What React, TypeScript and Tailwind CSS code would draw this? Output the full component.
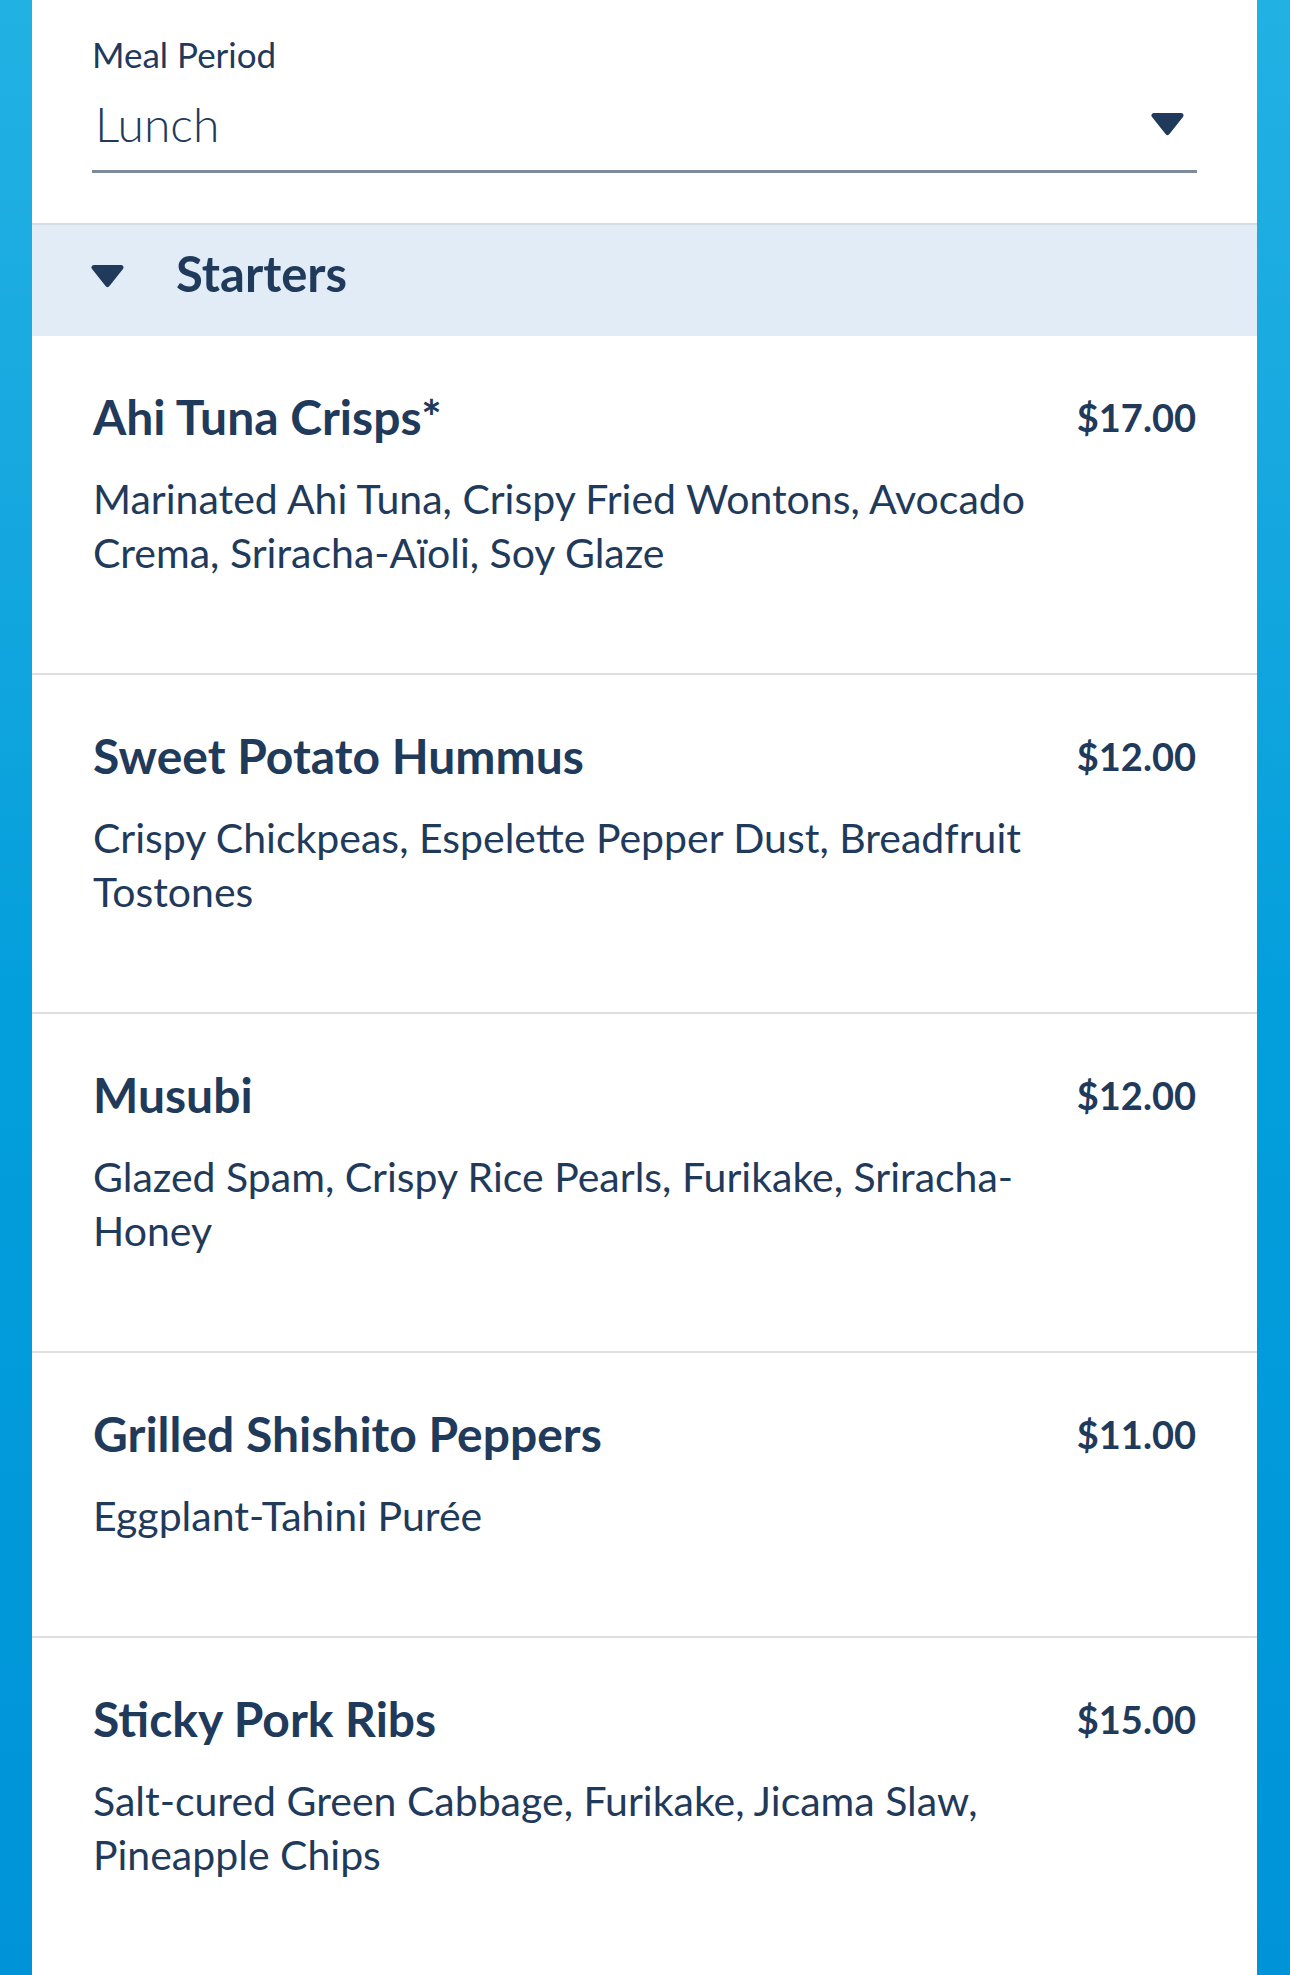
import React from 'react';

interface MenuItem {
  name: string;
  price: string;
  description: string;
}

const items: MenuItem[] = [
  {
    name: 'Ahi Tuna Crisps*',
    price: '$17.00',
    description: 'Marinated Ahi Tuna, Crispy Fried Wontons, Avocado Crema, Sriracha-Aïoli, Soy Glaze',
  },
  {
    name: 'Sweet Potato Hummus',
    price: '$12.00',
    description: 'Crispy Chickpeas, Espelette Pepper Dust, Breadfruit Tostones',
  },
  {
    name: 'Musubi',
    price: '$12.00',
    description: 'Glazed Spam, Crispy Rice Pearls, Furikake, Sriracha-Honey',
  },
  {
    name: 'Grilled Shishito Peppers',
    price: '$11.00',
    description: 'Eggplant-Tahini Purée',
  },
  {
    name: 'Sticky Pork Ribs',
    price: '$15.00',
    description: 'Salt-cured Green Cabbage, Furikake, Jicama Slaw, Pineapple Chips',
  },
];

const Caret = ({ className }: { className?: string }) => (
  <svg viewBox="0 0 35 24" className={className} aria-hidden="true">
    <path
      d="M4 3.5 H31 L17.5 20.5 Z"
      fill="#1f3a5a"
      stroke="#1f3a5a"
      strokeWidth="5"
      strokeLinejoin="round"
    />
  </svg>
);

const MenuRow = ({ item }: { item: MenuItem }) => (
  <div className="border-b-2 border-[#dedfe1] px-[61px] pt-[52px] pb-[93px]">
    <div className="flex items-start justify-between gap-8">
      <h3 className="text-[48px] leading-[58px] font-bold">{item.name}</h3>
      <span className="text-[38px] leading-[58px] font-bold">{item.price}</span>
    </div>
    <p className="mt-[26px] max-w-[980px] text-[41px] leading-[54px]">{item.description}</p>
  </div>
);

export default function App() {
  return (
    <div
      className="min-h-[1975px] pl-[32px] pr-[33px] bg-gradient-to-b from-[#22b1e3] via-[#039fdc] to-[#0093d8] text-[#1f3a5a]"
      style={{ fontFamily: 'Lato, "Noto Sans", sans-serif' }}
    >
      <div className="min-h-[1975px] bg-white">
        <div className="px-[60px] pt-[33px]">
          <div className="text-[35px] leading-[42px]">Meal Period</div>
          <div className="mt-[20px] flex items-center justify-between border-b-[3px] border-[#7d8b99] pb-[17px]">
            <span className="ml-[3px] text-[48px] leading-[58px] font-light">Lunch</span>
            <Caret className="mr-[12px] h-[24px] w-[35px]" />
          </div>
        </div>

        <div className="mt-[50px] flex h-[113px] items-center border-t-2 border-[#d6dce3] bg-[#e1ecf7] pl-[58px] pb-[16px]">
          <Caret className="mt-[6px] h-[24px] w-[35px]" />
          <h2 className="ml-[51px] text-[49px] leading-[58px] font-bold">Starters</h2>
        </div>

        <div>
          {items.map((item) => (
            <MenuRow key={item.name} item={item} />
          ))}
        </div>
      </div>
    </div>
  );
}
